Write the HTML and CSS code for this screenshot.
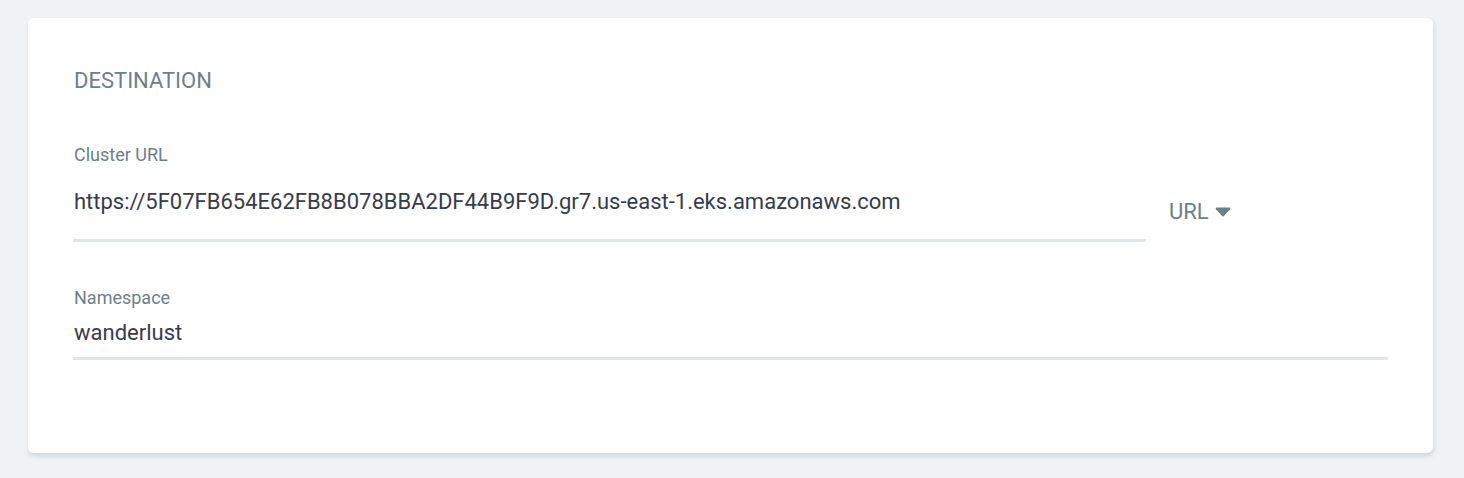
FILE: index.html
```
<!DOCTYPE html>
<html lang="en">
<head>
<meta charset="utf-8">
<title>Destination</title>
<link rel="stylesheet" href="styles.css">
</head>
<body>
<form class="panel">
  <h2 class="panel-title">DESTINATION</h2>
  <div class="row">
    <div class="field field-cluster">
      <label class="label" for="cluster">Cluster URL</label>
      <input class="input input-tall" id="cluster" type="text" spellcheck="false" value="https://5F07FB654E62FB8B078BBA2DF44B9F9D.gr7.us-east-1.eks.amazonaws.com">
    </div>
    <button class="kind" type="button">URL
      <svg class="caret" viewBox="0 0 16 10" aria-hidden="true"><path d="M1.6 0.5H14.4Q16 0.8 15 2.3L9.2 8.8Q8 10 6.8 8.8L1 2.3Q0 0.8 1.6 0.5Z"/></svg>
    </button>
  </div>
  <div class="field">
    <label class="label" for="namespace">Namespace</label>
    <input class="input" id="namespace" type="text" spellcheck="false" value="wanderlust">
  </div>
</form>
</body>
</html>
```
FILE: styles.css
```
* { box-sizing: border-box; }
body {
  margin: 0;
  padding: 18px 31px 25px 28px;
  background: #eff3f6;
  font-family: Roboto, "Liberation Sans", sans-serif;
  color: #363c4a;
}
.panel {
  padding: 49px 45px 93px;
  background: #fff;
  border-radius: 6px;
  box-shadow: 1px 3px 5px #ced5da;
}
.panel-title {
  margin: 0 0 48px;
  padding-left: 1px;
  font-size: 22px;
  line-height: 28px;
  font-weight: 400;
  color: #6d7f8b;
}
.row {
  display: flex;
  align-items: flex-end;
  gap: 23px;
  margin-bottom: 44px;
}
.field { display: flex; flex-direction: column; }
.field-cluster { flex: 0 0 81.6%; }
.label {
  padding-left: 1px;
  font-size: 18px;
  line-height: 24px;
  color: #6d7f8b;
}
.input {
  width: 100%;
  height: 50px;
  padding: 0 0 3px 1px;
  border: 0;
  border-bottom: 3px solid #dee6eb;
  background: transparent;
  font: inherit;
  font-size: 22px;
  color: inherit;
  outline: 0;
}
.input-tall { height: 75px; }
.kind {
  display: flex;
  align-items: center;
  gap: 6px;
  margin-bottom: 16px;
  padding: 0;
  border: 0;
  background: none;
  font: inherit;
  font-size: 22px;
  line-height: 28px;
  color: #6d7f8b;
}
.caret { width: 16px; height: 10px; fill: currentColor; }
```
